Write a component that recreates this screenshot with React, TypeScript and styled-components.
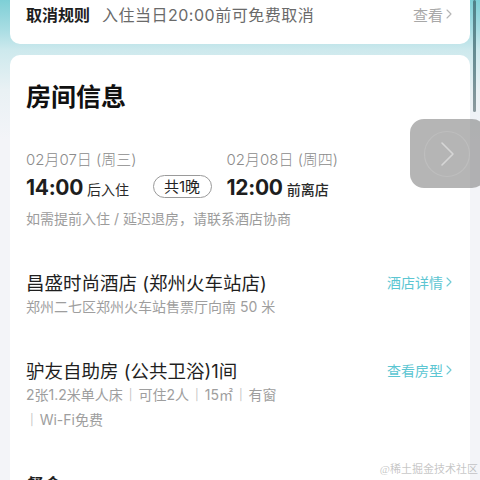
import React, { FC } from 'react';
import styled, { createGlobalStyle } from 'styled-components';

const GlobalStyle = createGlobalStyle`
  html, body {
    margin: 0;
    padding: 0;
    background: #f3f4f8;
  }
  body {
    font-family: "Inter", "Noto Sans CJK SC", "Noto Sans", sans-serif;
    color: #222;
  }
`;

const Chevron: FC<{ color: string; size?: number }> = ({ color, size = 10 }) => (
  <svg width={size * 0.6} height={size} viewBox="0 0 6 10" fill="none">
    <path d="M1 1l4 4-4 4" stroke={color} strokeWidth="1.1" strokeLinecap="round" strokeLinejoin="round" />
  </svg>
);

const App: FC = () => (
  <>
    <GlobalStyle />
    <SPage>
      <SColumn>
        <SPolicyCard>
          <SPolicyLabel>取消规则</SPolicyLabel>
          <SPolicyText>入住当日20:00前可免费取消</SPolicyText>
          <SMoreLink $color="#a8a8a8" $size={15}>
            查看
            <Chevron color="#b5b5b5" />
          </SMoreLink>
        </SPolicyCard>

        <SCard>
          <STitle>房间信息</STitle>

          <SStayRow>
            <SStayCol>
              <SDate>02月07日 (周三)</SDate>
              <STimeLine>
                <STime>14:00</STime>
                <STimeNote>后入住</STimeNote>
              </STimeLine>
            </SStayCol>
            <SNights>共1晚</SNights>
            <SStayCol>
              <SDate>02月08日 (周四)</SDate>
              <STimeLine>
                <STime>12:00</STime>
                <STimeNote $bold>前离店</STimeNote>
              </STimeLine>
            </SStayCol>
          </SStayRow>
          <SHint>如需提前入住 / 延迟退房，请联系酒店协商</SHint>

          <SInfoBlock>
            <SInfoHead>
              <SInfoName>昌盛时尚酒店 (郑州火车站店)</SInfoName>
              <SMoreLink $color="#5cc6d2">
                酒店详情
                <Chevron color="#6fcad6" />
              </SMoreLink>
            </SInfoHead>
            <SInfoSub>郑州二七区郑州火车站售票厅向南 50 米</SInfoSub>
          </SInfoBlock>

          <SInfoBlock>
            <SInfoHead>
              <SInfoName>驴友自助房 (公共卫浴)1间</SInfoName>
              <SMoreLink $color="#5cc6d2">
                查看房型
                <Chevron color="#6fcad6" />
              </SMoreLink>
            </SInfoHead>
            <SInfoSub>
              2张1.2米单人床<SSep>|</SSep>可住2人<SSep>|</SSep>15㎡<SSep>|</SSep>有窗
              <br />
              <SSep $first>|</SSep>Wi-Fi免费
            </SInfoSub>
          </SInfoBlock>

          <SSectionTitle>餐食</SSectionTitle>
        </SCard>
      </SColumn>

      <SScrollThumb />
      <SFloatButton>
        <svg width="48" height="48" viewBox="0 0 48 48" fill="none">
          <circle cx="24" cy="24" r="22.5" stroke="rgba(255,255,255,0.12)" strokeWidth="1.2" />
          <path d="M19 13l11 11-11 11" stroke="rgba(255,255,255,0.45)" strokeWidth="1.6" strokeLinecap="round" strokeLinejoin="round" />
        </svg>
      </SFloatButton>
      <SWatermark>@稀土掘金技术社区</SWatermark>
    </SPage>
  </>
);

export default App;

const SPage = styled.div`
  position: relative;
  width: 480px;
  height: 480px;
  overflow: hidden;
  background:
    linear-gradient(180deg, #7ecfd6 0px, #a9dde3 30px, #cde9ed 50px, #e9f1f4 90px, #f3f4f8 140px);
`;

const SColumn = styled.div`
  display: flex;
  flex-direction: column;
  gap: 11px;
  padding: 0 10px;
`;

const SPolicyCard = styled.div`
  display: flex;
  align-items: center;
  height: 28px;
  padding: 0 18px 16px 16px;
  background: #fff;
  border-radius: 0 0 10px 10px;
`;

const SPolicyLabel = styled.span`
  font-size: 16px;
  font-weight: 700;
  color: #1e1e1e;
  margin-right: 12px;
`;

const SPolicyText = styled.span`
  flex: 1;
  font-size: 16px;
  letter-spacing: 0.5px;
  color: #6a6a6a;
`;

const SMoreLink = styled.span<{ $color: string; $size?: number }>`
  display: inline-flex;
  align-items: center;
  gap: 3px;
  font-size: ${({ $size }) => $size ?? 14}px;
  color: ${({ $color }) => $color};
  white-space: nowrap;
`;

const SCard = styled.div`
  background: #fff;
  border-radius: 10px;
  padding: 26px 18px 0 16px;
  height: 480px;
`;

const STitle = styled.h2`
  margin: 0;
  font-size: 25px;
  line-height: 32px;
  font-weight: 700;
  color: #111;
`;

const SStayRow = styled.div`
  display: flex;
  align-items: flex-end;
  margin-top: 37px;
`;

const SStayCol = styled.div`
  display: flex;
  flex-direction: column;
`;

const SDate = styled.div`
  font-size: 15px;
  line-height: 20px;
  font-weight: 300;
  color: #8c8c8c;
`;

const STimeLine = styled.div`
  display: flex;
  align-items: baseline;
  gap: 4px;
  margin-top: 5px;
  height: 24px;
`;

const STime = styled.span`
  font-size: 21px;
  font-weight: 700;
  letter-spacing: -0.3px;
  color: #1e1e1e;
`;

const STimeNote = styled.span<{ $bold?: boolean }>`
  font-size: 14px;
  font-weight: ${({ $bold }) => ($bold ? 500 : 400)};
  color: #2a2a2a;
`;

const SNights = styled.div`
  box-sizing: border-box;
  width: 59px;
  margin: 0 15px 1px 16px;
  height: 23px;
  line-height: 21px;
  text-align: center;
  border: 1px solid #9a9a9a;
  border-radius: 12px;
  font-size: 15px;
  color: #222;
`;

const SHint = styled.div`
  margin-top: 10px;
  font-size: 14px;
  line-height: 20px;
  color: #9c9c9c;
`;

const SInfoBlock = styled.div`
  margin-top: 40px;

  & + & {
    margin-top: 38px;
  }
`;

const SInfoHead = styled.div`
  display: flex;
  align-items: center;
  justify-content: space-between;
  height: 26px;
`;

const SInfoName = styled.div`
  font-size: 18.5px;
  color: #1f1f1f;
`;

const SInfoSub = styled.div`
  font-size: 14px;
  line-height: 24px;
  color: #9e9e9e;
`;

const SSep = styled.span<{ $first?: boolean }>`
  display: inline-block;
  margin: ${({ $first }) => ($first ? '0 6px 0 4px' : '0 6px')};
  font-size: 11px;
  color: #c4c4c4;
  transform: translateY(-1px);
`;

const SSectionTitle = styled.div`
  margin-top: 38px;
  font-size: 18px;
  font-weight: 700;
  color: #1f1f1f;
`;

const SScrollThumb = styled.div`
  position: absolute;
  top: 0;
  right: 4px;
  width: 3px;
  height: 112px;
  border-radius: 2px;
  background: linear-gradient(180deg, #4f8189 0%, #6d8f95 60%, #8b9a9e 100%);
`;

const SFloatButton = styled.div`
  position: absolute;
  top: 119px;
  left: 410px;
  width: 76px;
  height: 69px;
  border-radius: 14px;
  background: rgba(120, 120, 120, 0.55);
  display: flex;
  align-items: center;
  padding-left: 13px;
  box-sizing: border-box;
`;

const SWatermark = styled.div`
  position: absolute;
  right: 2px;
  bottom: 4px;
  font-family: "Liberation Serif", "Noto Sans CJK SC", serif;
  font-size: 11px;
  color: rgba(150, 150, 150, 0.55);
`;
